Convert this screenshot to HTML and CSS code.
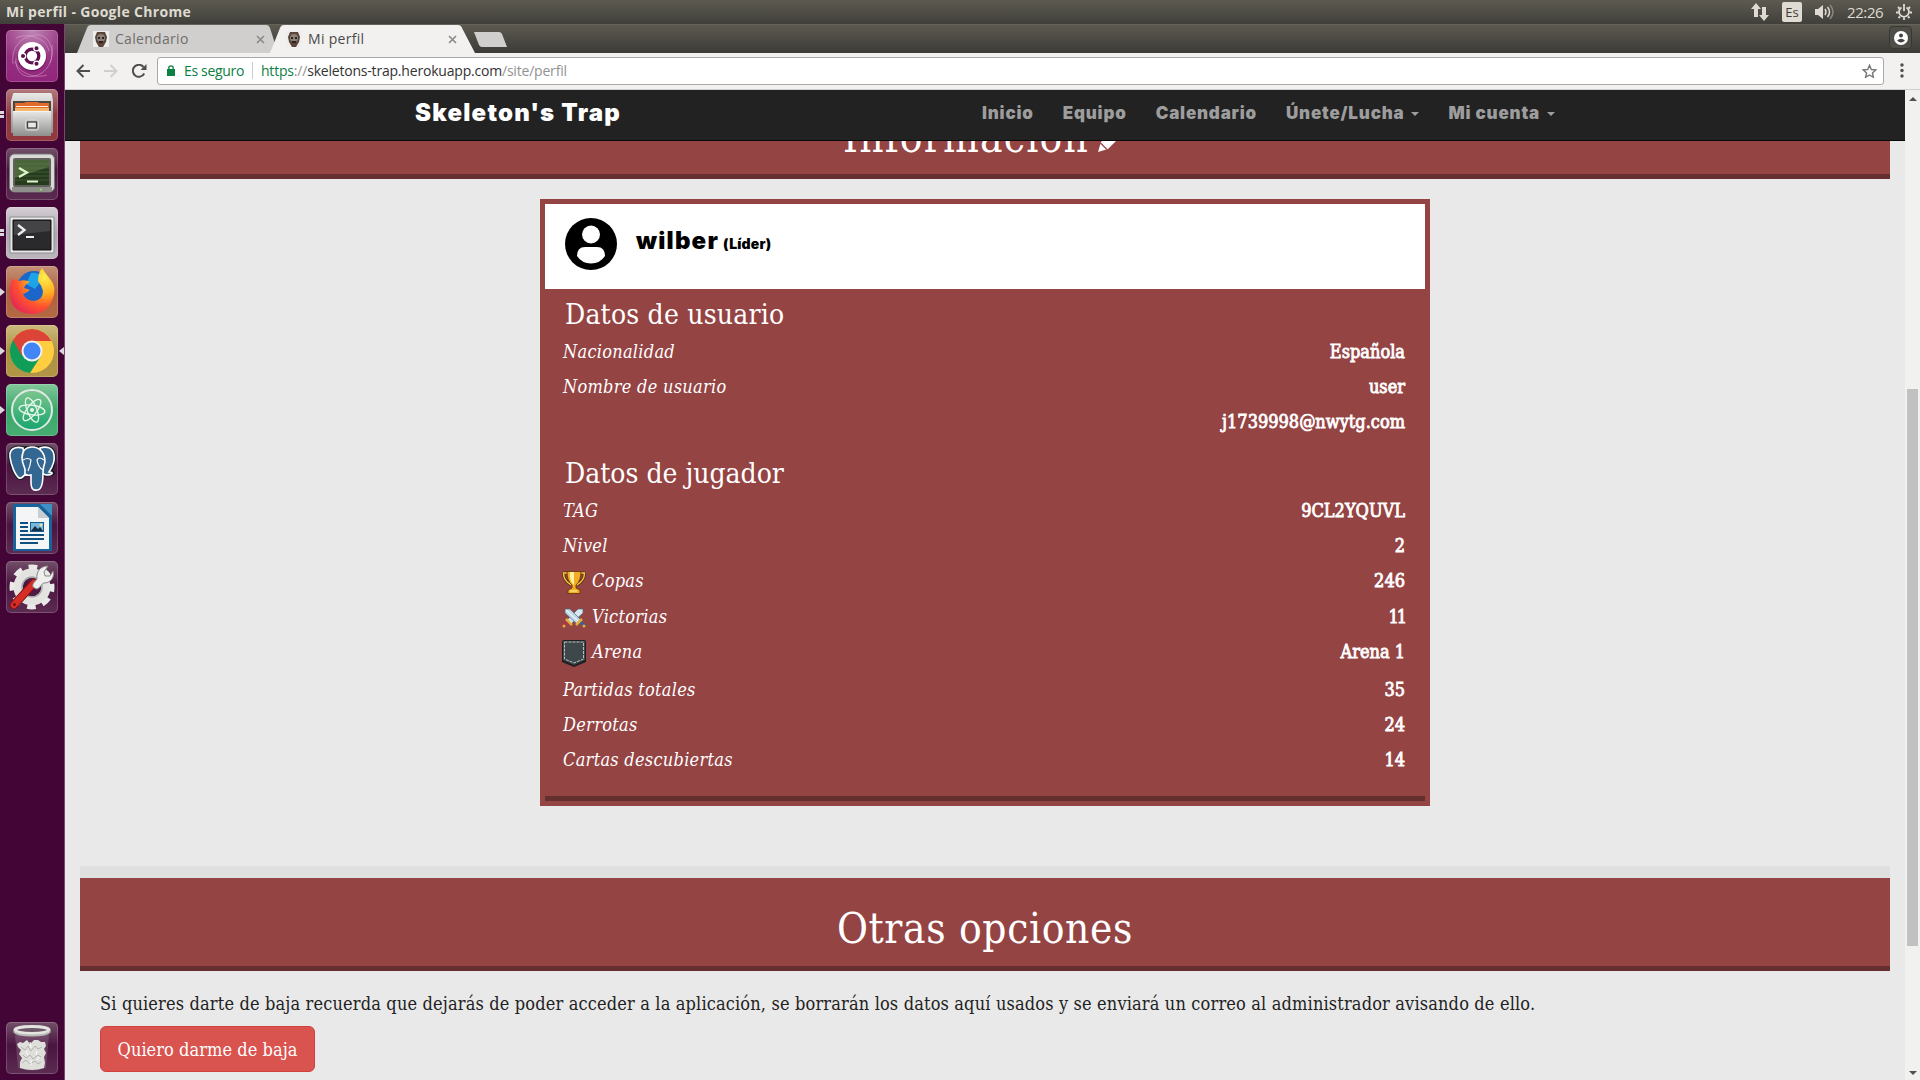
FILE: index.html
```html
<!DOCTYPE html>
<html lang="es">
<head>
<meta charset="utf-8">
<title>Mi perfil</title>
<link rel="stylesheet" href="styles.css">
</head>
<body>
<div class="desktop">
  <header class="panel">
    <span class="panel-title">Mi perfil - Google Chrome</span>
    <div class="indicators">
      <svg class="ind-net" width="18" height="18" viewBox="0 0 18 18" fill="#dfdbd2"><path d="M5 0 10 6H7v8H3V6H0zM13 18 8 12h3V4h4v8h3z"/></svg>
      <span class="ind-lang">Es</span>
      <svg class="ind-vol" width="20" height="16" viewBox="0 0 20 16"><path d="M0 5h3l5-4v14l-5-4H0z" fill="#dfdbd2"/><path d="M10 5q2 3 0 6M12.500 3q4 5 0 10" fill="none" stroke="#dfdbd2" stroke-width="1.500"/><path d="M15 1q6 7 0 14" fill="none" stroke="#8a877f" stroke-width="1.500"/></svg>
      <span class="ind-time">22:26</span>
      <svg class="ind-gear" width="16" height="16" viewBox="0 0 16 16" fill="none" stroke="#dfdbd2"><path d="M5.500 3.500a5 5 0 1 0 5 0" stroke-width="1.800"/><path d="M8 0v7M2 3l1.500 1.500M14 3l-1.500 1.500M0 8.500h2.500M13.500 8.500H16M2.500 14l1.500-1.500M13.500 14 12 12.500M8 13.500V16" stroke-width="1.800"/></svg>
    </div>
  </header>
  <div class="workspace">
    <nav class="launcher">
      <div class="tile tile-dash"><svg viewBox="0 0 52 52"><g fill="none" stroke="#e3a9d8" stroke-opacity=".5"><path d="M7 34C5 18 14 7 29 5s20 16 15 28"/><path d="M46 15c2 16-5 28-17 31S9 41 10 28"/><path d="M10 8c12-6 30 0 33 13M41 45C28 49 12 43 9 31"/></g><circle cx="26" cy="27" r="14.500" fill="#5a0b4a" opacity=".5"/><circle cx="26" cy="26" r="14" fill="#fff"/><circle cx="26" cy="26" r="6.800" fill="none" stroke="#5e1150" stroke-width="3.300"/><g fill="#5e1150" stroke="#fff" stroke-width="1.300"><circle cx="17" cy="26" r="2.700"/><circle cx="30.500" cy="18.200" r="2.700"/><circle cx="30.500" cy="33.800" r="2.700"/></g></svg></div>
      <div class="tile tile-files"><i class="run-double"></i><svg viewBox="0 0 52 52"><defs><linearGradient id="metal" x2="0" y2="1"><stop stop-color="#e9e9e7"/><stop offset="1" stop-color="#8f8f8d"/></linearGradient></defs><path d="M7 5q0-1 1-1h36q2 0 2 2l1 6v32H5V12z" fill="url(#metal)"/><path d="M7 12h38v10H7z" fill="#4b4843"/><path d="M9 14h9l2-1h12l1 1h10v8H9z" fill="#e06b2c"/><path d="M9 19h34v3H9z" fill="#f3b36a"/><path d="M10 17.500h32" stroke="#fff1da"/><path d="M7 22h38v25H7z" fill="url(#metal)"/><path d="M7 22.500h38" stroke="#f5f5f5"/><rect x="19.500" y="31" width="13" height="10" rx="2" fill="#b9b9b7" stroke="#dcdcdc"/><rect x="21.500" y="33" width="9" height="6" fill="#e9e9e9" stroke="#444" stroke-width="1.300"/></svg></div>
      <div class="tile tile-dim"><svg viewBox="0 0 52 52"><rect x="3.500" y="6" width="45" height="38" rx="5" fill="#d9d9d6" stroke="#777"/><path d="M6 39h40v3q0 2-3 2H9q-3 0-3-2z" fill="#8e8e8b"/><rect x="7" y="10" width="38" height="29" rx="2" fill="#60615c"/><path d="M9 12h34v25H9z" fill="#263b1e"/><path d="M9 12h34v7L9 30z" fill="#4b653a"/><path d="M9 16h34M9 20h34M9 24h34M9 28h34M9 32h34" stroke="#6c8850" stroke-opacity=".4"/><path d="m13 20 8 4.500-8 4.500" fill="none" stroke="#dbf5c8" stroke-width="2.200"/><path d="M21 33.500h11" stroke="#dbf5c8" stroke-width="2"/><circle cx="35" cy="41.500" r="1" fill="#8dfa45"/></svg></div>
      <div class="tile tile-term"><i class="run-double"></i><svg viewBox="0 0 52 52"><path d="M4 10h44v36H4z" fill="#e7e7e8" stroke="#8e8c90"/><path d="M7 13h38v30H7z" fill="#2a2a2c" stroke="#111"/><path d="M8 14h36v10L8 28z" fill="#444446"/><path d="m12 18 6.500 5-6.500 5" fill="none" stroke="#eee" stroke-width="2.300"/><path d="M20 30h8" stroke="#eee" stroke-width="2"/></svg></div>
      <div class="tile tile-firefox"><i class="run-single"></i><svg viewBox="0 0 52 52"><defs><radialGradient id="fox" cx=".78" cy=".2" r=".95"><stop stop-color="#ffef4c"/><stop offset=".38" stop-color="#ffad20"/><stop offset=".68" stop-color="#ff512f"/><stop offset="1" stop-color="#e42458"/></radialGradient></defs><circle cx="28" cy="22" r="17" fill="#1c66c9"/><path d="M25 7q9-2 11 7l-7 9-9-5z" fill="#1ca3e8"/><path d="M7 12q1 4 3 1 1 2 3 2 6-2 11 1-5 2-6 6l6 2q-4 3-7 4 3 7 11 7 9-1 9-10-1-5-5-10 0-8 4-13 4 6 8 11 6 7 4 16-5 19-22 19Q5 47 4 28 3 19 7 12z" fill="url(#fox)"/></svg></div>
      <div class="tile tile-chrome"><i class="run-single"></i><i class="run-focus"></i><svg viewBox="0 0 52 52"><circle cx="26" cy="26" r="22" fill="#ffcd40"/><path d="M26 26 6.900 15A22 22 0 0 0 24 48l11-17z" fill="#0f9d58"/><path d="M26 26 16 31 6.900 15A22 22 0 0 1 45.500 16H26z" fill="#db4437"/><circle cx="26" cy="26" r="10.500" fill="#f1f1f1"/><circle cx="26" cy="26" r="8.500" fill="#4285f4"/></svg></div>
      <div class="tile tile-atom"><i class="run-single"></i><svg viewBox="0 0 52 52"><defs><linearGradient id="atom" x2="0" y2="1"><stop stop-color="#7cc68d"/><stop offset="1" stop-color="#16a56d"/></linearGradient></defs><circle cx="26" cy="26" r="20" fill="url(#atom)" stroke="#dfe8e2" stroke-width="2"/><g fill="none" stroke="#e7f8ec" stroke-width="1.300"><ellipse cx="26" cy="26" rx="13" ry="4.800" transform="rotate(8 26 26)"/><ellipse cx="26" cy="26" rx="13" ry="4.800" transform="rotate(68 26 26)"/><ellipse cx="26" cy="26" rx="13" ry="4.800" transform="rotate(128 26 26)"/></g><circle cx="26" cy="26" r="2" fill="#e7f8ec"/></svg></div>
      <div class="tile tile-dim"><svg viewBox="0 0 52 52"><g stroke="#fff" stroke-width="1.600" fill="#336791"><path d="M17 5C9 3 3 6 4 14c1 8 5 18 9 21 3 1 5-2 7-5l12 1q5 2 14 0 3-2-2-2 5-9 4-17C47 4 40 3 34 5z" stroke="#101820" stroke-width="3.500"/><path d="M17 5C9 3 3 6 4 14c1 8 5 18 9 21 3 1 5-2 7-5z"/><path d="M34 5c6-2 13-1 14 7 1 5-1 11-5 17 5 0 4 3-3 3l-5-2z"/><path d="M16 15C16 8 20 4 26 4s13 4 13 15q-2 5-2 11c0 8-1 17-6 17-5 1-6-3-6-8v-7c-5 1-7-1-6-4 1-2-3-7-3-13z"/><path d="M17 17q5-3 8 0-1 7-3 11M38 17q-5-4-7 0 1 7 6 10M21 32l-4 1" fill="none" stroke-width="1.200"/></g></svg></div>
      <div class="tile tile-dim"><svg viewBox="0 0 52 52"><path d="M7 3q0-1 1-1h26l12 12v34q0 1-1 1H7z" fill="#17639c"/><path d="M34 2h12v12z" fill="#3c91c8"/><path d="M10 5h22l11 11v31H10z" fill="#f3f5f6"/><path d="M32 5v11h11z" fill="#c8cdd0"/><path d="M14 21h8M14 25h8M14 29h8M14 33h24M14 37h24M14 41h18" stroke="#125080" stroke-width="1.800"/><path d="M24 20h14v10H24z" fill="#135c94"/><path d="M25 21h12v8H25z" fill="#78b7de"/><path d="m25 29 4-5 3 3 2-2 3 4z" fill="#162f40"/><circle cx="35" cy="23" r="1.500" fill="#f1e29b"/></svg></div>
      <div class="tile tile-dim"><svg viewBox="0 0 52 52"><circle cx="26" cy="26" r="14" fill="none" stroke="#e3e3e1" stroke-width="9"/><circle cx="26" cy="26" r="20" fill="none" stroke="#e9e9e7" stroke-width="5" stroke-dasharray="8.700 7" stroke-dashoffset="4"/><circle cx="26" cy="26" r="10" fill="none" stroke="#aaa" stroke-width="1.500"/><path d="m8 44 20-22" stroke="#7c1010" stroke-width="8.500" stroke-linecap="round"/><path d="m8 44 20-22" stroke="#d72d27" stroke-width="6.500" stroke-linecap="round"/><path d="M27 26c-1-4 2-5 4-8-1-7 3-13 11-13l-4 6 1 4 5 0 3-5c2 7-3 12-9 12-3 1-4 6-8 6z" fill="#efefed" stroke="#888"/><circle cx="8.500" cy="43.500" r="1.500" fill="#6e1010"/></svg></div>
      <div class="tile tile-dim tile-trash"><svg viewBox="0 0 52 52"><path d="m9 13 3 33q14 5 28 0l3-33z" fill="#cfc5cf" opacity=".2"/><path d="m11 22 3-2 3 1 4-3 3 4 4-4 4 0 3 2 4 0 1 4-2 3 2 4-2 4 1 6-1 5q-12 4-24 0l0-6 2-4-3-4 2-4-3-3z" fill="#dedfda"/><path d="m15 25 4 3 3-4 3 5 4-5 3 3 4-2M17 33l3 3 4-3 3 4 5-4 3 2M16 41l4-3 4 4 5-3 3 3 3-2" stroke="#b2b4ae" fill="none"/><path d="m24 20 1 6M20 29l2 4M31 29l-1 4M25 38v5M33 35l-2 3" stroke="#fff"/><ellipse cx="26" cy="8" rx="17" ry="3.500" fill="#6c5668" stroke="#e3e5e0" stroke-width="3"/><path d="M7.500 8q3 4.500 18.500 4.500T44.500 8v2.500q-3 4-18.500 4t-18.500-4z" fill="#b9bcb7"/></svg></div>
    </nav>
    <main class="browser">
      <div class="tabstrip">
        <div class="tab tab-back">
          <svg class="tab-shape" viewBox="0 0 201 28" preserveAspectRatio="none"><path d="M0 28 10 3q1-3 4-3h175q3 0 4 3l8 25z" fill="#d1cfcd"/></svg>
          <svg class="favicon" viewBox="0 0 16 16"><path d="M0 0h16v16H0z" fill="#eee"/><path d="M4 1h8l2 5-1 5-3 5H6l-3-5-1-5z" fill="#5c4438"/><circle cx="8" cy="7" r="4" fill="#85817c"/><path d="M5 6h2v2H5zm4 0h2v2H9zM6 10h4v2H6z" fill="#34211c"/></svg>
          <span class="tab-title">Calendario</span>
          <svg class="tab-close" viewBox="0 0 9 9"><path d="m1 1 7 7M8 1 1 8" stroke="#8b8987" stroke-width="1.600"/></svg>
        </div>
        <div class="tab tab-active">
          <svg class="tab-shape" viewBox="0 0 205 28" preserveAspectRatio="none"><path d="M0 28 10 3q1-3 4-3h174q3 0 4 3l13 25z" fill="#f2f1f0"/></svg>
          <svg class="favicon" viewBox="0 0 16 16"><path d="M0 0h16v16H0z" fill="#eee"/><path d="M4 1h8l2 5-1 5-3 5H6l-3-5-1-5z" fill="#5c4438"/><circle cx="8" cy="7" r="4" fill="#85817c"/><path d="M5 6h2v2H5zm4 0h2v2H9zM6 10h4v2H6z" fill="#34211c"/></svg>
          <span class="tab-title">Mi perfil</span>
          <svg class="tab-close" viewBox="0 0 9 9"><path d="m1 1 7 7M8 1 1 8" stroke="#8b8987" stroke-width="1.600"/></svg>
        </div>
        <svg class="new-tab" width="33" height="15" viewBox="0 0 33 15"><path d="M0 0h25q2 0 3 2l5 13H8q-2 0-3-2z" fill="#d1cfcd"/></svg>
        <div class="profile"><svg width="14" height="14" viewBox="0 0 14 14"><circle cx="7" cy="7" r="7" fill="#fff"/><circle cx="7" cy="4.500" r="2" fill="#444"/><path d="M3 9.500q4-3.500 8 0-4 4-8 0z" fill="#444"/></svg></div>
      </div>
      <div class="toolbar">
        <svg class="nav-arrow" width="14" height="14" viewBox="0 0 14 14" fill="none" stroke="#4e4e4e" stroke-width="2"><path d="M14 7H1.500M7.500 1l-6 6 6 6"/></svg>
        <svg class="nav-arrow" width="14" height="14" viewBox="0 0 14 14" fill="none" stroke="#cfcfce" stroke-width="2"><path d="M0 7h12.500M6.500 1l6 6-6 6"/></svg>
        <svg class="nav-reload" width="15" height="14" viewBox="0 0 15 14"><path d="M12.200 9.500A6 6 0 1 1 11.500 3" fill="none" stroke="#4e4e4e" stroke-width="2"/><path d="M14.500 0v6h-6z" fill="#4e4e4e"/></svg>
        <div class="omnibox">
          <svg width="8" height="11" viewBox="0 0 8 11"><path d="M0 4h8v7H0z" fill="#0b8043"/><path d="M1.800 4.500V3a2.200 2.200 0 0 1 4.400 0v1.500" fill="none" stroke="#0b8043" stroke-width="1.300"/></svg>
          <span class="secure">Es seguro</span>
          <span class="url"><b>https</b><i>://</i>skeletons-trap.herokuapp.com<i>/site/perfil</i></span>
          <svg class="star" width="15" height="14" viewBox="0 0 24 23"><path d="m12 2 3 7 7.500.600-5.700 5 1.700 7.200L12 18l-6.500 3.800 1.700-7.200-5.700-5L9 9z" fill="none" stroke="#777" stroke-width="2.300"/></svg>
        </div>
        <svg class="kebab" width="4" height="15" viewBox="0 0 4 15" fill="#4e4e4e"><circle cx="2" cy="2" r="1.700"/><circle cx="2" cy="7.500" r="1.700"/><circle cx="2" cy="13" r="1.700"/></svg>
      </div>
      <div class="viewport">
        <div class="page">
          <nav class="navbar">
            <a class="brand">Skeleton's Trap</a>
            <ul class="menu">
              <li>Inicio</li>
              <li>Equipo</li>
              <li>Calendario</li>
              <li class="drop">Únete/Lucha</li>
              <li class="drop">Mi cuenta</li>
            </ul>
          </nav>
          <section class="band band-info">
            <h1>Información<svg width="29" height="29" viewBox="0 0 29 29" fill="#fff"><path d="m0 29 3-10L20 2q2-2 4 0l3 3q2 2 0 4L10 26z"/><path d="m2.500 20 6.500 6.500" stroke="#954444" stroke-width="1.300"/></svg></h1>
          </section>
          <section class="card">
            <div class="card-head">
              <svg width="52" height="52" viewBox="0 0 52 52"><circle cx="26" cy="26" r="26"/><circle cx="26" cy="16.500" r="9" fill="#fff"/><path d="M12 38q0-9 8-9h12q8 0 8 9-5 7.500-14 7.500T12 38z" fill="#fff"/></svg>
              <span class="nick">wilber</span><span class="rank">(Líder)</span>
            </div>
            <div class="card-body">
              <h2>Datos de usuario</h2>
              <dl>
                <div><dt>Nacionalidad</dt><dd>Española</dd></div>
                <div><dt>Nombre de usuario</dt><dd>user</dd></div>
                <div><dt></dt><dd>j1739998@nwytg.com</dd></div>
              </dl>
              <h2 class="second">Datos de jugador</h2>
              <dl>
                <div><dt>TAG</dt><dd>9CL2YQUVL</dd></div>
                <div><dt>Nivel</dt><dd>2</dd></div>
                <div class="row-cups"><dt><svg width="24" height="23" viewBox="0 0 24 23"><path d="M1 2h5M23 2h-5M1.500 2q0 8 8 12M22.500 2q0 8-8 12" fill="none" stroke="#5d3208" stroke-width="3"/><path d="M1 2h5M23 2h-5M1.500 2q0 8 8 12M22.500 2q0 8-8 12" fill="none" stroke="#f7c84b" stroke-width="1.400"/><path d="M5 .5h14Q19 10 14 14v3l4 2v3.500H6V19l4-2v-3Q5 10 5 .500z" fill="#f2ad24" stroke="#5d3208" stroke-width=".8"/><path d="M8 1h4v13Q7 10 8 1z" fill="#fff0a0"/><path d="M8 20h7" stroke="#fff0a0"/></svg>Copas</dt><dd>246</dd></div>
                <div><dt><svg class="swords" width="24" height="20" viewBox="0 0 24 20"><path d="m1 18 6-5" stroke="#b33344" stroke-width="2.500"/><path d="m23 18-6-5" stroke="#2b659e" stroke-width="2.500"/><path d="M21 1v4L9 16l-4-4L16 1z" fill="#d8e8f0" stroke="#4b6575" stroke-width=".7"/><path d="M3 1v4l12 11 4-4L8 1z" fill="#c1d9e7" stroke="#4b6575" stroke-width=".7"/><path d="m4 2 13 12" stroke="#fff"/><path d="m4 11 6 6M20 11l-6 6" stroke="#e2ad3d" stroke-width="2.500"/><circle cx="2" cy="18" r="1.500" fill="#e2ad3d"/><circle cx="22" cy="18" r="1.500" fill="#e2ad3d"/></svg>Victorias</dt><dd class="ones">11</dd></div>
                <div class="row-arena"><dt><svg width="24" height="27" viewBox="0 0 24 27"><path d="M0 2q0-2 2-2h20q2 0 2 2v20l-12 5L0 22z" fill="#1c2021"/><path d="M1 1h22v19l-11 5L1 20z" fill="#3e4749"/><path d="M2.500 2h19v17L12 23l-9.500-4z" fill="none" stroke="#b7bfc0" stroke-dasharray="3 1"/></svg>Arena</dt><dd>Arena 1</dd></div>
                <div><dt>Partidas totales</dt><dd>35</dd></div>
                <div><dt>Derrotas</dt><dd>24</dd></div>
                <div><dt>Cartas descubiertas</dt><dd>14</dd></div>
              </dl>
            </div>
          </section>
          <section class="band band-options">
            <h1>Otras opciones</h1>
          </section>
          <section class="leave">
            <p>Si quieres darte de baja recuerda que dejarás de poder acceder a la aplicación, se borrarán los datos aquí usados y se enviará un correo al administrador avisando de ello.</p>
            <button class="danger">Quiero darme de baja</button>
          </section>
        </div>
        <div class="scrollbar"><i class="arrow-up"></i><i class="thumb"></i><i class="arrow-down"></i></div>
      </div>
    </main>
  </div>
</div>
</body>
</html>
```
FILE: styles.css
```css
* { box-sizing: border-box; }
body { margin: 0; background: #e9e9e9; overflow: hidden; }
svg { display: block; flex: none; }
h1, h2, p, dl, dd, ul { margin: 0; padding: 0; }
h1, h2 { font-weight: 400; }

.desktop { width: 1920px; height: 1080px; display: flex; flex-direction: column; font-family: "Open Sans", "Noto Sans", sans-serif; }
.panel { height: 24px; flex: none; display: flex; justify-content: space-between; align-items: center; padding: 0 8px 0 6px; background: linear-gradient(#5d5b50, #403f3a); color: #dfdbd2; }
.panel-title { font-size: 14px; font-weight: 700; line-height: 24px; letter-spacing: .32px; }
.indicators { display: flex; align-items: center; }
.ind-lang { width: 20px; height: 20px; margin: 0 13px 0 13px; border-radius: 2px; background: #dfdbd2; color: #3c3b37; font-size: 13px; line-height: 20px; text-align: center; }
.ind-time { margin: 0 11px 0 12px; font-size: 15px; width: 38px; letter-spacing: -.4px; }

.workspace { display: flex; flex: 1; min-height: 0; }
.launcher { width: 65px; flex: none; display: flex; flex-direction: column; gap: 7px; padding: 6px 0 6px 6px; background: #430535; border-right: 1px solid #7c4572; }
.tile { position: relative; width: 52px; height: 52px; flex: none; border-radius: 5px; box-shadow: inset 0 0 0 1px rgba(255,255,255,.18); }
.tile-dim { background: linear-gradient(#735069, #4a1440 45%, #5c2c52); }
.tile-dash { background: radial-gradient(circle at 50% 0, #bf86b4, #94307f 60%, #92237c); }
.tile-files { background: linear-gradient(#b17a7d, #8d3840 50%, #93393f); }
.tile-term { background: linear-gradient(#d5cfd5, #aca5ae 50%, #bdb7bd); }
.tile-firefox { background: linear-gradient(#c49277, #ae6040 50%, #b46a43); }
.tile-chrome { background: linear-gradient(#cdbb7d, #ad9242 50%, #b29648); }
.tile-atom { background: linear-gradient(#83c89b, #3aa76a 50%, #48ae73); }
.tile-trash { margin-top: auto; }
.run-single, .run-focus { position: absolute; top: 22px; border: 4px solid transparent; }
.run-single { left: -6px; border-left: 5px solid #dcd8dc; border-right: 0; }
.run-focus { left: 53px; border-right: 5px solid #dcd8dc; border-left: 0; }
.run-double { position: absolute; left: -6px; top: 22px; width: 4px; height: 7px; border: solid #dcd8dc; border-width: 3px 0; }

.browser { flex: 1; min-width: 0; display: flex; flex-direction: column; }
.tabstrip { height: 29px; flex: none; display: flex; padding: 0 8px 0 12px; background: linear-gradient(#5b594f, #3c3b37); border-top: 1px solid #66645a; }
.tab { position: relative; display: flex; align-items: center; height: 28px; padding: 0 13px 0 16px; color: #6f6d6b; font-size: 14px; letter-spacing: .3px; }
.tab > * { position: relative; }
.tab .tab-shape { position: absolute; left: 0; top: 0; width: 100%; height: 100%; }
.tab-back { width: 201px; }
.tab-active { width: 205px; margin-left: -8px; padding-right: 18px; color: #4a4947; }
.favicon { width: 16px; height: 16px; margin-right: 6px; }
.tab-title { flex: 1; line-height: 26px; }
.tab-close { width: 9px; height: 9px; }
.new-tab { margin: 7px 0 0 -1px; }
.profile { margin: 1px 0 0 auto; width: 23px; height: 23px; display: grid; place-items: center; border: 1px solid #393833; border-radius: 4px; background: #4e4d47; }

.toolbar { height: 37px; flex: none; display: flex; align-items: center; padding: 0 16px 1px 11px; background: #f2f1f0; border-bottom: 1px solid #cfcecc; }
.nav-arrow { margin-right: 14px; }
.omnibox { flex: 1; height: 28px; margin: 0 16px 0 10px; display: flex; align-items: center; padding: 0 6px 0 9px; background: #fff; border: 1px solid #aaa9a7; border-radius: 3px; font-size: 14px; line-height: 24px; color: #333; }
.secure { margin-left: 9px; color: #0b8043; letter-spacing: -.33px; }
.url { margin-left: 8px; padding-left: 8px; line-height: 17px; border-left: 1px solid #ccc; letter-spacing: -.2px; }
.url b { font-weight: 400; color: #0b8043; }
.url i { font-style: normal; color: #929292; }
.star { margin-left: auto; }

.viewport { flex: 1; min-height: 0; display: flex; }
.page { flex: 1; min-width: 0; overflow: hidden; padding: 0 15px; background: #e9e9e9; font-family: "Roboto Slab", "DejaVu Serif Condensed", "DejaVu Serif", serif; font-stretch: condensed; font-size: 18px; color: #222; }
.navbar { position: relative; height: 51px; margin: 0 -15px; display: flex; justify-content: space-between; padding: 0 350px; background: #222; border-bottom: 1px solid #080808; font-family: Inter, sans-serif; font-weight: 900; line-height: 46px; }
.brand { color: #fff; font-size: 24px; letter-spacing: 1.24px; }
.menu { display: flex; list-style: none; gap: 29px; color: #9d9d9d; font-size: 17px; letter-spacing: .8px; }
.drop::after { content: ""; display: inline-block; margin-left: 7px; vertical-align: middle; border: 4px solid transparent; border-top-color: #9d9d9d; border-bottom: 0; }
.band { background: #954444; border-bottom: 5px solid #632f2f; color: #fff; text-align: center; }
.band h1 { font-size: 42px; line-height: 60px; letter-spacing: .65px; }
.band-info { height: 38px; overflow: hidden; }
.band-info h1 { display: flex; justify-content: center; margin-top: -33px; letter-spacing: 1.2px; }
.band-info svg { margin: 15px 0 0 9px; }
.band-options { height: 105px; margin-top: 60px; border-top: 12px solid #e0e0e0; padding-top: 21px; }

.card { width: 890px; height: 607px; margin: 20px auto 0; border: 5px solid #954444; background: #954444; color: #fff; }
.card-head { height: 85px; display: flex; align-items: baseline; padding: 14px 20px; background: #fff; color: #000; font-family: Inter, sans-serif; font-weight: 900; }
.card-head svg { align-self: flex-start; margin-right: 19px; }
.nick { font-size: 24px; line-height: 46px; letter-spacing: 1.22px; }
.rank { margin-left: 4px; font-size: 14px; letter-spacing: .21px; }
.card-body { height: 512px; padding: 5px 20px 0 18px; border-bottom: 5px solid #632f2f; }
h2 { height: 40px; padding-left: 2px; font-size: 28px; line-height: 42px; letter-spacing: .2px; }
h2.second { height: 41px; margin-top: 13px; line-height: 43px; letter-spacing: 0; }
dl > div { display: flex; justify-content: space-between; height: 35px; line-height: 35px; }
dt { display: flex; font-style: italic; letter-spacing: .28px; }
dt svg { margin: 8px 6px 0 -1px; }
dd { -webkit-text-stroke: .8px #fff; }
dl .row-cups { height: 36px; }
dl .row-arena { height: 38px; }
.row-arena svg { margin-top: 6px; }
dt .swords { margin-top: 9px; }
.ones { margin-right: -2px; letter-spacing: -2px; padding-right: 2px; }

.leave { padding: 15px 20px; }
.leave p { line-height: 36px; white-space: nowrap; letter-spacing: .16px; }
.danger { display: block; width: 215px; height: 46px; margin-top: 4px; padding: 0; border: 1px solid #d43f3a; border-radius: 6px; background: #d9534f; color: #fff; font: inherit; letter-spacing: .06px; }

.scrollbar { width: 15px; flex: none; display: flex; flex-direction: column; align-items: center; padding: 7px 0 5px; background: #f1f1f0; }
.arrow-up { border: 4px solid transparent; border-top: 0; border-bottom-color: #505050; }
.arrow-down { margin-top: auto; border: 4px solid transparent; border-bottom: 0; border-top-color: #505050; }
.thumb { width: 11px; height: 557px; margin-top: 288px; background: #c1c1c1; }
```
